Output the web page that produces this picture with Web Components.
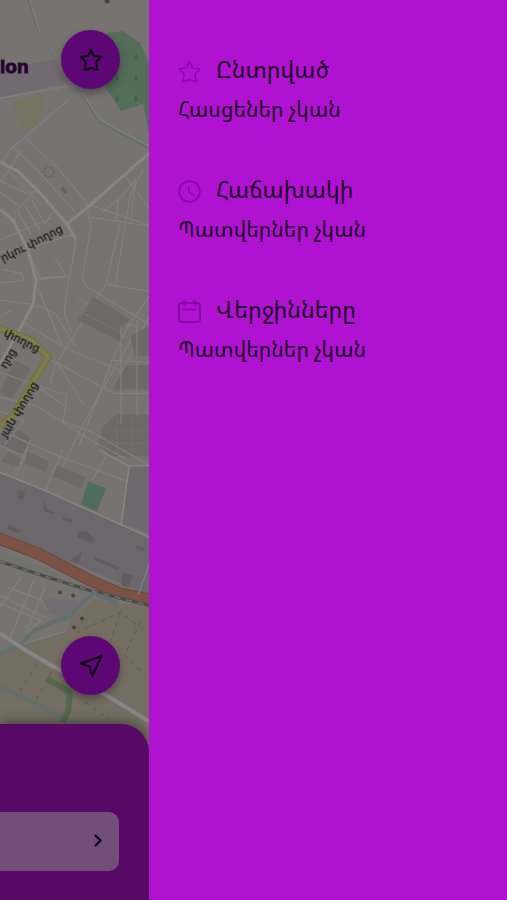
<!DOCTYPE html>
<html lang="hy"><head><meta charset="utf-8"><title>Քարտեզ</title>
<style>
body{margin:0;background:#767371;font-family:"Noto Sans Armenian","Noto Sans","DejaVu Sans",sans-serif}
</style></head><body>
<ride-page></ride-page>
<script>
const define=(name,html)=>customElements.define(name,class extends HTMLElement{
  constructor(){super();this.attachShadow({mode:"open"}).innerHTML=html;}
});

define("city-map",`<style>
:host{display:block}
svg{display:block;width:100%;height:100%}
.r{fill:none;stroke:#828180;stroke-width:1.2}
.w{fill:none;stroke:#868686;stroke-width:3}
.b{fill:#6c6a69}
.riv{fill:none;stroke:#626f6c;stroke-width:2.5}
text{font-family:"DejaVu Sans",sans-serif;font-size:11px;fill:#2b2a29;stroke:#2b2a29;stroke-width:.4}
.brand{font:bold 19px "Liberation Sans",sans-serif;fill:#1c0428;stroke:#2e0738;stroke-width:1}
</style>
<svg viewBox="0 0 149 900" preserveAspectRatio="xMinYMin slice" aria-hidden="true">
<rect width="149" height="900" fill="#767371"/>
<path fill="#716a70" d="M0 70L54 59 68 83 0 97z"/>
<path fill="#767460" d="M12 102L44 95 40 120 24 134z"/>
<path fill="#536d59" d="M105 34L122 31 140 43 149 63V135L143 104 121 111 105 87z"/>
<g fill="#465f4e"><path d="M134 60l2-7 2 7zM134 81l2-7 2 7zM134 101l2-7 2 7zM115 101l2-7 2 7zM115 80l2-7 2 7z"/></g>
<path class="riv" d="M29 0L39 33 65 67 80 90 99 121 123 134 149 148"/>
<path class="r" d="M30 0L40 34 66 68 81 91 100 120 124 133 149 146M0 98L63 87 90 84M68 100L24 138 12 147 2 162M25 138L55 165 78 192 88 205M12 146L42 175 76 213M21 151L8 171 0 182M8 171L41 204"/>
<path class="w" d="M0 162L18 171 40 193 67 224 76 239M67 224L90 205 124 175 149 153M0 209L13 220 28 250 36 280 33 304 19 330 0 364"/>
<path class="r" d="M0 181L28 194 36 191M14 213L36 191M0 192L18 205M18 212L31 234M25 206L40 230M32 200L45 224M45 224L52 212M0 240L18 232 52 218M0 252L28 248 71 235 76 240 67 290 64 312 72 333M28 248L40 278 68 276M36 280L66 276M55 257L65 274M38 288L62 345M36 305L55 313 76 347M24 323L70 350 149 382M0 300L32 304M0 316L12 310M0 283L24 280 21 271M3 269L22 274"/>
<path class="r" d="M86 205L91 226 82 278 86 286 149 324M90 205L149 225M102 212L121 197 135 180M124 175L149 208M121 220L106 283M143 170L130 195 126 220 115 287M118 200L116 219M135 180L131 219M91 217L149 226M106 284L149 291M78 298L138 328 111 374 84 422 61 470M84 303L128 326M105 285L77 330 55 365 50 384M149 296L128 326 112 360 94 408 79 445M149 315L126 364 111 391"/>
<g class="b"><path d="M92 296L130 319 119 331 84 312zM83 313L119 332 124 343 77 320zM130 335L149 326V356H135zM126 365H149V389H112zM15 360L31 369 11 399 0 390zM3 420L31 438 24 455 0 445z"/></g>
<path class="b" d="M103 426L117 414 149 414V456H114L98 446z"/>
<g fill="none" stroke="#737170"><path d="M117 414V453M132 416V455M104 430H149M101 443H149"/></g>
<path class="r" d="M0 372L34 384 67 395 63 421 92 432 149 465M34 384L64 405M58 363L84 405M0 397L36 405 89 439 125 458M0 430L62 457 149 489M52 360L114 393 149 393M111 360L149 362M121 326V424M137 320V416M0 445L45 465M0 411L24 420 4 445M31 439L15 471"/>
<path fill="none" stroke="#73723c" stroke-width="7" d="M0 328L32 340 48 357 31 385 14 414 0 426"/>
<path fill="none" stroke="#7e7c50" stroke-width="4" d="M0 328L32 340 48 357 31 385 14 414 0 426"/>
<text transform="translate(3 262) rotate(-27)">րկու փողոց</text>
<text transform="translate(3 335) rotate(27)">փողոց</text>
<text transform="translate(6 369) rotate(-60)">ղոց</text>
<text transform="translate(6 438) rotate(-59)">յան փողոց</text>
<path fill="#6c676b" d="M0 473L44 491 149 538V595L80 565 0 533z"/>
<path fill="#6f696d" d="M129 465L149 466V533L123 523z"/>
<path class="w" style="stroke-width:1.5" d="M0 472L45 490 149 537M100 450L129 466 149 465M129 466L121 524"/>
<g class="b"><path d="M8 452L21 458 18 467 1 461zM27 451L49 461 46 472 25 464zM57 465L86 477 81 488 53 476z"/></g>
<path class="r" d="M27 449L16 477M63 450L45 490M108 453L92 480"/>
<path fill="#4f6c60" d="M88 481L106 488 97 511 81 504z"/>
<g fill="#625c5e"><path d="M19 490l6 2-1 8-6-2zM44 500l2 8 9 4-2 2-10-4zM63 517l10 2-1 3-10-2zM78 532l8-2 9 9-3 4-15-6zM70 560l12-9-3 12zM94 556l26 11-2 3-25-11zM123 572l10 3-5 12-7-2zM8 524l13 6-2 3-12-5zM137 545l9 3-3 3-8-3z"/></g>
<path fill="none" stroke="#67463e" stroke-width="12" d="M-4 537L40 554 90 580 120 593 149 599"/>
<path fill="none" stroke="#7c5245" stroke-width="10" d="M-4 537L40 554 90 580 120 593 149 599"/>
<path fill="#70726b" d="M0 550L60 575 100 593 93 594 0 563z"/>
<path fill="#746e62" d="M0 650L40 640 67 630 72 617 94 599 120 604 149 606V740H0z"/>
<path fill="#6f6d6f" d="M52 598L78 600 70 619 49 612 43 601z"/>
<path fill="none" stroke="#4b4a49" stroke-width="3" d="M0 561L45 576 90 590 149 605"/>
<path fill="none" stroke="#73716f" stroke-width="1.5" stroke-dasharray="6 6" d="M0 561L45 576 90 590 149 605"/>
<path class="riv" style="stroke-width:4" d="M119 603L94 593 84 600 70 616 52 622 32 631 20 646 0 653M0 686L30 700 60 716 85 730"/>
<path class="r" d="M0 595L45 617M22 576L0 606M34 580L10 637M45 586L26 632M0 603L41 620 28 632M8 587L42 600 47 610M149 564L138 594M65 631L24 643"/>
<path class="w" style="stroke-width:4" d="M0 633L26 650 62 671 110 697 149 721"/>
<path fill="none" stroke="#54684c" stroke-width="6" d="M47 678L70 692 68 711 62 722"/>
<g fill="none" stroke="#635b50" stroke-dasharray="5 4"><path d="M37 664L17 695M52 671L34 703M76 632L120 612 145 630M120 613L111 640M140 621L125 655 145 675M85 702L108 718"/></g>
<g fill="#454340"><circle cx="60" cy="592" r="2"/><circle cx="73" cy="595" r="2"/><circle cx="82" cy="618" r="2"/><circle cx="74" cy="627" r="2"/><circle cx="107" cy="1" r="2.5"/></g>
<circle cx="49" cy="172" r="5" fill="none" stroke="#65625b" stroke-width="2" stroke-dasharray="2 1.5"/><path fill="#65625b" d="M60 188l3-2 5 6-3 2z"/>
<text class="brand" x="0" y="73">lon</text>
</svg>`);

define("round-button",`<style>
:host{display:block}
button{display:grid;place-items:center;width:59px;height:59px;padding:0;border:0;border-radius:50%;background:#5d0775;color:#100016;box-shadow:0 4px 9px #0005}
</style><button aria-label="Կոճակ"><slot></slot></button>`);

define("address-sheet",`<style>
:host{display:block;background:#560965;border-radius:0 28px 0 0;padding:88px 30px 29px 0;box-shadow:0 -2px 12px #0006}
button{display:flex;justify-content:flex-end;align-items:center;width:100%;height:59px;border:0;padding:0 14px;border-radius:0 10px 10px 0;background:#714d77;color:#100016}
</style><button aria-label="Հասցե"><svg width="14" height="20" viewBox="0 0 14 20" fill="none" stroke="currentColor" stroke-width="2.2"><path d="M4 3L9.500 8.500 4 14"/></svg></button>`);

define("order-group",`<style>
:host{display:block}
header{display:flex;align-items:center;gap:15px;height:32px}
.i{display:grid;place-items:center;width:23px;height:24px;padding-top:4px;color:#850aa2}
h2{margin:0;font-size:23px;font-weight:400;line-height:32px;white-space:nowrap}
p{margin:0;padding-top:8px;font-size:21px;line-height:32px}
</style><header><span class="i"><slot name="icon"></slot></span><h2><slot name="title"></slot></h2></header><p><slot></slot></p>`);

define("side-drawer",`<style>
:host{display:flex;flex-direction:column;gap:48px;padding:53px 29px;background:#b012d2;color:#1d0224}
</style><slot></slot>`);

define("ride-page",`<style>
:host{display:grid;grid-template-columns:minmax(0,5fr) minmax(0,12fr);min-height:100vh}
main{position:relative;display:flex;flex-direction:column;overflow:hidden}
city-map{position:absolute;inset:0}
.tools{position:relative;flex:1;display:flex;flex-direction:column;justify-content:space-between;align-items:flex-end;padding:30px 29px 29px 0}
address-sheet{position:relative}
svg{display:block}
</style>
<main><city-map></city-map>
<div class="tools">
<round-button><svg width="24" height="24" viewBox="0 0 24 24" fill="none" stroke="currentColor" stroke-width="2" stroke-linejoin="round"><path d="M12 1.500L14.800 8 22.200 9 17.200 14 18.300 22 12 20 5.700 22 6.800 14 1.800 9 9.200 8z"/></svg></round-button>
<round-button><svg width="24" height="24" viewBox="0 0 24 24" fill="none" stroke="currentColor" stroke-width="2" stroke-linejoin="round"><path d="M22.500 2L2 9.500 10.500 12.500 13.500 22z"/></svg></round-button>
</div>
<address-sheet></address-sheet></main>
<side-drawer>
<order-group><svg slot="icon" width="23" height="23" viewBox="0 0 24 24" fill="none" stroke="currentColor" stroke-width="1.500" stroke-linejoin="round"><path d="M12 1L15.200 8.200 23 9.300 17.600 14.800 18.800 22.800 12 20.300 5.200 22.800 6.400 14.800 1 9.300 8.800 8.200z"/></svg><span slot="title">Ընտրված</span>Հասցեներ չկան</order-group>
<order-group><svg slot="icon" width="23" height="23" viewBox="0 0 24 24" fill="none" stroke="currentColor" stroke-width="1.700"><circle cx="12" cy="12" r="10.800"/><path d="M11.500 6V13L17 16"/></svg><span slot="title">Հաճախակի</span>Պատվերներ չկան</order-group>
<order-group><svg slot="icon" width="23" height="23" viewBox="0 0 24 24" fill="none" stroke="currentColor" stroke-width="2"><rect x="1" y="3" width="22" height="20" rx="3"/><path d="M6.500 0V6M17.500 0V6M5 10H19"/></svg><span slot="title">Վերջինները</span>Պատվերներ չկան</order-group>
</side-drawer>`);
</script></body></html>
